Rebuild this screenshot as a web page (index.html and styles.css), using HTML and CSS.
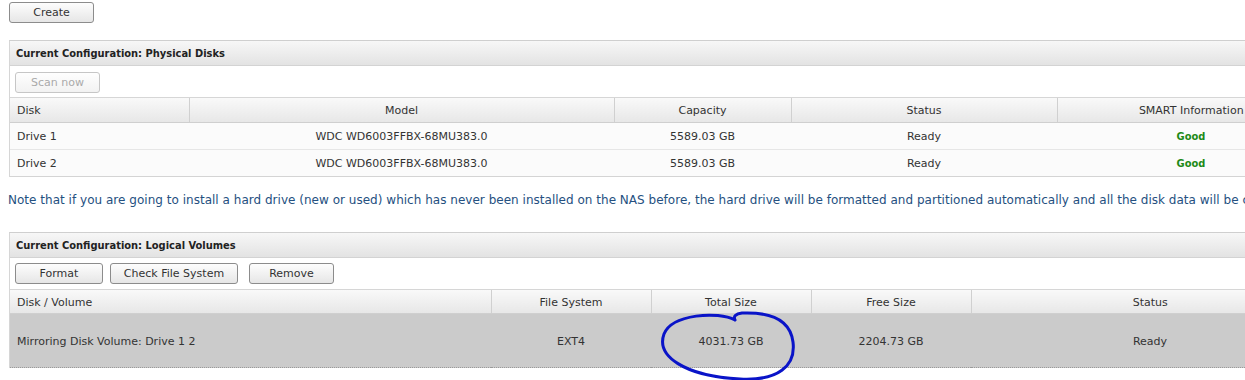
FILE: index.html
```html
<!DOCTYPE html>
<html lang="en">

<head>
    <meta charset="UTF-8">
    <meta name="viewport" content="width=device-width, initial-scale=1.0">
    <title>Disk Management</title>
    <link rel="stylesheet" href="styles.css">
</head>

<body>
    <div class="page">
        <div class="top">
            <button class="btn btn-create">Create</button>
        </div>

        <div class="panel">
            <div class="panel-title">Current Configuration: Physical Disks</div>
            <div class="toolbar">
                <button class="btn btn-scan" disabled>Scan now</button>
            </div>
            <table class="grid disks">
                <colgroup>
                    <col style="width:179px">
                    <col style="width:425px">
                    <col style="width:177px">
                    <col style="width:266px">
                    <col style="width:268px">
                </colgroup>
                <thead>
                    <tr>
                        <th class="left">Disk</th>
                        <th>Model</th>
                        <th>Capacity</th>
                        <th>Status</th>
                        <th>SMART Information</th>
                    </tr>
                </thead>
                <tbody>
                    <tr>
                        <td class="left">Drive 1</td>
                        <td>WDC WD6003FFBX-68MU383.0</td>
                        <td>5589.03 GB</td>
                        <td>Ready</td>
                        <td class="good">Good</td>
                    </tr>
                    <tr>
                        <td class="left">Drive 2</td>
                        <td>WDC WD6003FFBX-68MU383.0</td>
                        <td>5589.03 GB</td>
                        <td>Ready</td>
                        <td class="good">Good</td>
                    </tr>
                </tbody>
            </table>
        </div>

        <p class="note">Note that if you are going to install a hard drive (new or used) which has never been installed on the NAS before, the hard drive will be formatted and partitioned automatically and all the disk data will be cleared.</p>

        <div class="panel">
            <div class="panel-title">Current Configuration: Logical Volumes</div>
            <div class="toolbar">
                <button class="btn btn-format">Format</button>
                <button class="btn btn-check">Check File System</button>
                <button class="btn btn-remove">Remove</button>
            </div>
            <table class="grid volumes">
                <colgroup>
                    <col style="width:481px">
                    <col style="width:160px">
                    <col style="width:160px">
                    <col style="width:160px">
                    <col style="width:358px">
                </colgroup>
                <thead>
                    <tr>
                        <th class="left">Disk / Volume</th>
                        <th>File System</th>
                        <th>Total Size</th>
                        <th>Free Size</th>
                        <th>Status</th>
                    </tr>
                </thead>
                <tbody>
                    <tr class="selected">
                        <td class="left">Mirroring Disk Volume: Drive 1 2</td>
                        <td>EXT4</td>
                        <td>4031.73 GB</td>
                        <td>2204.73 GB</td>
                        <td>Ready</td>
                    </tr>
                </tbody>
            </table>
        </div>
    </div>

    <!-- hand drawn circle over the total size -->
    <svg class="scribble" width="1245" height="380" viewBox="0 0 1245 380">
        <path d="M735 320 C718 311 672 314 664 334 C656 356 684 376 740 379 C778 381 796 366 793 342 C790 318 768 312 742 313 C736 314 733 316 735 320"
            fill="none" stroke="#0a14c8" stroke-width="3" stroke-linecap="round" stroke-linejoin="round" />
    </svg>
</body>

</html>
```

FILE: styles.css
```css
* {
    margin: 0;
    padding: 0;
    box-sizing: border-box;
}

body {
    font-family: Tahoma, "DejaVu Sans", sans-serif;
    font-size: 11px;
    color: #333;
    background: #fff;
    overflow: hidden;
    position: relative;
    width: 1245px;
    height: 380px;
}

.page {
    padding: 2px 0 0 9px;
    width: 1400px;
}

.top {
    height: 38px;
}

.btn {
    height: 21px;
    border: 1px solid #8c8c8c;
    border-radius: 3px;
    background: linear-gradient(#fdfdfd, #e6e6e6);
    font-family: inherit;
    font-size: 11px;
    color: #333;
}

.btn-create {
    width: 85px;
}

.btn-scan {
    width: 85px;
    color: #aaa;
    border-color: #c6c6c6;
    background: linear-gradient(#fefefe, #f2f2f2);
}

.btn-format {
    width: 88px;
}

.btn-check {
    width: 128px;
    margin-left: 7px;
}

.btn-remove {
    width: 85px;
    margin-left: 11px;
}

.panel {
    width: 1330px;
    border-left: 1px solid #d6d6d6;
    border-top: 1px solid #cfcfcf;
}

.panel-title {
    height: 25px;
    line-height: 25px;
    padding-left: 6px;
    font-family: Tahoma, "DejaVu Sans Condensed", sans-serif;
    font-weight: bold;
    color: #222;
    background: linear-gradient(#f7f7f7, #e3e3e3);
    border-bottom: 1px solid #d3d3d3;
}

.toolbar {
    display: flex;
    align-items: center;
    height: 32px;
    padding: 1px 0 0 5px;
    border-bottom: 1px solid #d6d6d6;
}

.grid {
    border-collapse: collapse;
    table-layout: fixed;
    width: 1315px;
}

.grid th {
    height: 24px;
    padding: 2px 6px 0;
    font-weight: normal;
    color: #333;
    background: linear-gradient(#f9f9f9, #e7e7e7);
    border-left: 1px solid #d0d0d0;
    border-bottom: 1px solid #cfcfcf;
    text-align: center;
}

.grid th:first-child {
    border-left: 0;
}

.grid .left {
    text-align: left;
    padding-left: 7px;
}

.grid td {
    text-align: center;
    white-space: nowrap;
    padding: 2px 6px 0;
}

.disks td {
    height: 27px;
    background: #fbfbfb;
    border-bottom: 1px solid #e6e6e6;
}

.disks tbody tr:last-child td {
    border-bottom: 1px solid #d4d4d4;
}

.good {
    color: #1d8a17;
    font-family: Tahoma, "DejaVu Sans Condensed", sans-serif;
    font-weight: bold;
}

.note {
    margin: 16px 0 0 -1px;
    height: 39px;
    font-size: 12px;
    letter-spacing: 0.02px;
    color: #25507f;
    white-space: nowrap;
}

.volumes th {
    height: 24px;
}

.volumes td {
    height: 54px;
    padding-top: 1px;
    background: #cbcbcb;
    border-top: 1px dotted #9a9a9a;
    border-bottom: 1px dotted #9a9a9a;
}

.scribble {
    position: absolute;
    left: 0;
    top: 0;
    pointer-events: none;
}
```
